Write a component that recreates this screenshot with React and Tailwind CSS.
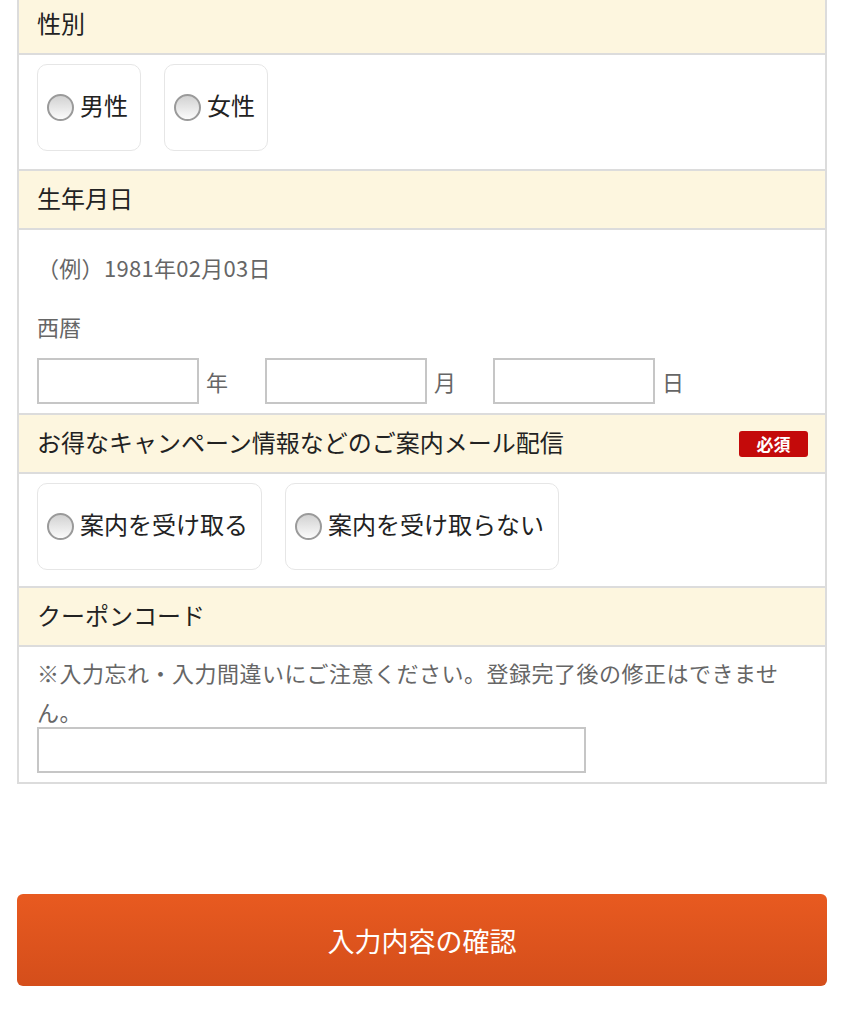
import React from "react";

const font = { fontFamily: '"Noto Sans CJK JP", "Noto Sans", sans-serif' };

function Radio({ label, w }) {
  return (
    <label className={`flex items-center h-[87px] rounded-[10px] border border-[#e6e6e6] bg-white pl-[9px] ${w}`}>
      <span className="w-[27px] h-[27px] rounded-full border-2 border-[#9a9a9a] bg-gradient-to-b from-[#d2d2d2] to-[#fbfbfb] shrink-0" />
      <span className="ml-[6px] pb-[5px] text-[24px] text-[#222] leading-none">{label}</span>
    </label>
  );
}

function Header({ children, badge, first }) {
  return (
    <div className={`flex items-center justify-between h-[59px] bg-[#fdf6df] border-b-2 border-[#dcdcdc] pl-[18px] pr-[17px] ${first ? "-mt-[4px]" : ""}`}>
      <span className="pb-[3px] text-[24px] text-[#222] leading-none">{children}</span>
      {badge && (
        <span className="flex items-center justify-center w-[69px] h-[26px] rounded-[3px] bg-[#c40a0a] text-white text-[17px] font-bold leading-none">
          必須
        </span>
      )}
    </div>
  );
}

function DateInput({ label }) {
  return (
    <div className="flex items-center">
      <div className="w-[162px] h-[46px] border-2 border-[#c6c6c6] bg-white" />
      <span className="ml-[7px] w-[22px] text-[22px] text-[#666] leading-none">{label}</span>
    </div>
  );
}

export default function App() {
  return (
    <div className="w-[844px] min-h-[1024px] bg-white overflow-hidden" style={font}>
      <div className="mx-[17px] border-x-2 border-b-2 border-[#dcdcdc]">
        <Header first>性別</Header>
        <div className="flex gap-[23px] pl-[18px] pt-[9px] pb-[18px] border-b-2 border-[#dcdcdc]">
          <Radio label="男性" w="w-[104px]" />
          <Radio label="女性" w="w-[104px]" />
        </div>

        <Header>生年月日</Header>
        <div className="pl-[18px] pt-[22px] pb-[9px] border-b-2 border-[#dcdcdc]">
          <div className="text-[22px] tracking-[0.3px] leading-[30px] text-[#666]">（例）1981年02月03日</div>
          <div className="mt-[29px] text-[22px] leading-[30px] text-[#666]">西暦</div>
          <div className="mt-[17px] flex gap-[37px]">
            <DateInput label="年" />
            <DateInput label="月" />
            <DateInput label="日" />
          </div>
        </div>

        <Header badge>お得なキャンペーン情報などのご案内メール配信</Header>
        <div className="flex gap-[23px] pl-[18px] pt-[9px] pb-[16px] border-b-2 border-[#dcdcdc]">
          <Radio label="案内を受け取る" w="w-[225px]" />
          <Radio label="案内を受け取らない" w="w-[274px]" />
        </div>

        <Header>クーポンコード</Header>
        <div className="pl-[18px] pr-[18px] pt-[6px] pb-[9px]">
          <p className="text-[22px] tracking-[0.5px] leading-[39px] text-[#666]">
            ※入力忘れ・入力間違いにご注意ください。登録完了後の修正はできませ
            <br />
            ん。
          </p>
          <div className="-mt-[4px] w-[549px] h-[46px] border-2 border-[#c6c6c6] bg-white" />
        </div>
      </div>

      <div className="mx-[17px] mt-[110px] h-[92px] rounded-[6px] bg-gradient-to-b from-[#e85a20] to-[#d44e1b] flex items-center justify-center">
        <span className="text-white text-[27px] leading-none">入力内容の確認</span>
      </div>
    </div>
  );
}
